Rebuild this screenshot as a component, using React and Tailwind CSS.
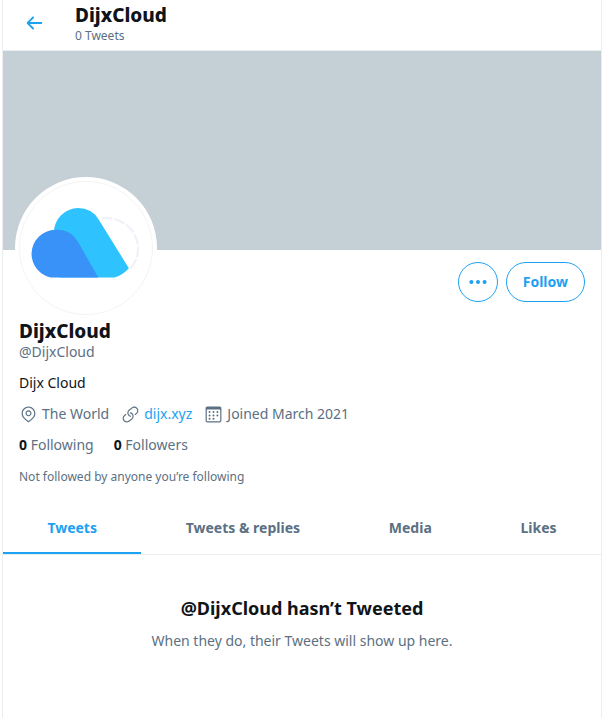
import React from "react";

function Icon({ className, children }) {
  return (
    <svg viewBox="0 0 24 24" aria-hidden="true" className={`shrink-0 fill-current ${className}`}>
      {children}
    </svg>
  );
}

function BackIcon() {
  return (
    <Icon className="size-[22px]">
      <path d="M20 11H7.414l4.293-4.293c.39-.39.39-1.023 0-1.414s-1.023-.39-1.414 0l-6 6c-.39.39-.39 1.023 0 1.414l6 6c.195.195.45.293.707.293s.512-.098.707-.293c.39-.39.39-1.023 0-1.414L7.414 13H20c.553 0 1-.447 1-1s-.447-1-1-1z" />
    </Icon>
  );
}

function PinIcon() {
  return (
    <Icon className="size-[19px]">
      <path d="M12 14.315c-2.088 0-3.787-1.698-3.787-3.786S9.913 6.74 12 6.74s3.787 1.7 3.787 3.787-1.7 3.785-3.787 3.785zm0-6.073c-1.26 0-2.287 1.026-2.287 2.287S10.74 12.814 12 12.814s2.287-1.025 2.287-2.286S13.26 8.24 12 8.24z" />
      <path d="M20.692 10.69C20.692 5.9 16.792 2 12 2s-8.692 3.9-8.692 8.69c0 1.902.603 3.708 1.743 5.223l.003-.002.007.015c1.628 2.07 6.278 5.757 6.475 5.912.138.11.302.163.465.163.163 0 .327-.053.465-.162.197-.155 4.847-3.84 6.475-5.912l.007-.014.002.002c1.14-1.516 1.742-3.32 1.742-5.223zM12 20.29c-1.224-.99-4.52-3.715-5.756-5.285-.94-1.25-1.436-2.742-1.436-4.312C4.808 6.727 8.035 3.5 12 3.5s7.192 3.226 7.192 7.19c0 1.57-.497 3.062-1.436 4.313-1.236 1.57-4.532 4.294-5.756 5.285z" />
    </Icon>
  );
}

function LinkIcon() {
  return (
    <Icon className="size-[19px]">
      <path d="M11.96 14.945c-.067 0-.136-.01-.203-.027-1.13-.318-2.097-.986-2.795-1.932-.832-1.125-1.176-2.508-.968-3.893s.942-2.605 2.068-3.438l3.53-2.608c2.322-1.716 5.61-1.224 7.33 1.1.83 1.127 1.175 2.51.967 3.895s-.943 2.605-2.07 3.438l-1.48 1.094c-.333.246-.804.175-1.05-.158-.246-.334-.176-.804.158-1.05l1.48-1.095c.803-.592 1.327-1.463 1.476-2.45.148-.988-.098-1.975-.69-2.778-1.225-1.656-3.572-2.01-5.23-.784l-3.53 2.608c-.802.593-1.326 1.464-1.475 2.45-.15.99.097 1.975.69 2.778.498.675 1.187 1.15 1.992 1.377.4.114.633.528.52.928-.092.33-.394.547-.722.547z" />
      <path d="M7.27 22.054c-1.61 0-3.197-.735-4.225-2.125-.832-1.127-1.176-2.51-.968-3.894s.943-2.605 2.07-3.438l1.478-1.094c.334-.245.805-.175 1.05.158s.177.804-.157 1.05l-1.48 1.095c-.803.593-1.326 1.464-1.475 2.45-.148.99.097 1.975.69 2.778 1.225 1.657 3.57 2.01 5.23.785l3.528-2.608c1.658-1.225 2.01-3.57.785-5.23-.498-.674-1.187-1.15-1.992-1.376-.4-.113-.633-.527-.52-.927.112-.4.528-.63.926-.522 1.13.318 2.096.986 2.794 1.932 1.717 2.324 1.224 5.612-1.1 7.33l-3.53 2.608c-.933.693-2.023 1.026-3.105 1.026z" />
    </Icon>
  );
}

function CalendarIcon() {
  return (
    <Icon className="size-[19px]">
      <path d="M19.708 2H4.292C3.028 2 2 3.028 2 4.292v15.416C2 20.972 3.028 22 4.292 22h15.416C20.972 22 22 20.972 22 19.708V4.292C22 3.028 20.972 2 19.708 2zm.792 17.708c0 .437-.355.792-.792.792H4.292c-.437 0-.792-.355-.792-.792V6.418c0-.437.354-.79.79-.792h15.42c.436 0 .79.355.79.79V19.71z" />
      <circle cx="7.032" cy="8.75" r="1.285" />
      <circle cx="12" cy="8.75" r="1.285" />
      <circle cx="16.968" cy="8.75" r="1.285" />
      <circle cx="7.032" cy="13.156" r="1.285" />
      <circle cx="12" cy="13.156" r="1.285" />
      <circle cx="16.968" cy="13.156" r="1.285" />
      <circle cx="7.032" cy="17.486" r="1.285" />
      <circle cx="12" cy="17.486" r="1.285" />
    </Icon>
  );
}

function MoreIcon() {
  return (
    <Icon className="size-[22px]">
      <circle cx="4.8" cy="12" r="2.2" />
      <circle cx="12" cy="12" r="2.2" />
      <circle cx="19.2" cy="12" r="2.2" />
    </Icon>
  );
}

function CloudLogo() {
  return (
    <svg viewBox="0 0 134 134" role="img" aria-label="DijxCloud logo" className="size-full">
      <path
        d="M83 37 A32 31 0 0 1 112 88"
        fill="none"
        stroke="#f1f2f9"
        strokeWidth="2.5"
        strokeDasharray="11 2"
      />
      <path
        d="M34.500 51 A24.500 24.500 0 0 1 59 26.500 A24.500 24.500 0 0 1 80 38.400 L110.500 87.500 Q105 94 96 97 H40 Z"
        fill="#2ec3ff"
      />
      <path
        d="M31 97 A25 25 0 0 1 11.700 73 A24.500 24.500 0 0 1 36 48.500 C46 48 54 52 59 61 L79.500 97 Z"
        fill="#3992f8"
      />
    </svg>
  );
}

const tabs = ["Tweets", "Tweets & replies", "Media", "Likes"];

export default function App() {
  return (
    <main className="ml-0.5 min-h-screen max-w-[600px] border-x border-[#ebeef0] bg-white font-['Noto_Sans','Open_Sans',sans-serif] text-sm leading-5 text-[#5b7083]">
      <header className="flex h-[51px] items-center border-b border-[#ebeef0] pl-5">
        <button type="button" aria-label="Back" className="mr-[30px] -mt-1 text-[#1da1f2]">
          <BackIcon />
        </button>
        <div className="-mt-0.5">
          <h2 className="text-[19px] leading-6 font-extrabold text-[#0f1419]">DijxCloud</h2>
          <p className="text-xs leading-[18px]">0 Tweets</p>
        </div>
      </header>

      <div className="h-[199px] bg-[#c4cfd6]" />

      <section className="px-4">
        <div className="flex items-start justify-between pt-3">
          <a
            href="#photo"
            className="-mt-[85px] -ml-1 size-[142px] rounded-full bg-white p-1"
          >
            <span className="block size-full overflow-hidden rounded-full border border-[#f3f4f5]">
              <CloudLogo />
            </span>
          </a>
          <div className="flex gap-2">
            <button
              type="button"
              aria-label="More"
              className="flex size-10 items-center justify-center rounded-full border border-[#1da1f2] text-[#1da1f2]"
            >
              <MoreIcon />
            </button>
            <button
              type="button"
              className="h-10 rounded-full border border-[#1da1f2] px-4 font-bold text-[#1da1f2]"
            >
              Follow
            </button>
          </div>
        </div>

        <h1 className="text-[19px] leading-6 font-extrabold text-[#0f1419]">DijxCloud</h1>
        <p className="leading-[18px]">@DijxCloud</p>
        <p className="mt-3 text-[#0f1419]">Dijx Cloud</p>

        <div className="mt-[11px] flex items-center">
          <span className="mr-3 flex items-center gap-1">
            <PinIcon />
            The World
          </span>
          <span className="mr-3 flex items-center gap-1">
            <LinkIcon />
            <a href="#website" className="text-[#1da1f2]">dijx.xyz</a>
          </span>
          <span className="flex items-center gap-1">
            <CalendarIcon />
            Joined March 2021
          </span>
        </div>

        <div className="mt-[11px] flex gap-5">
          <a href="#following">
            <b className="text-[#0f1419]">0</b> Following
          </a>
          <a href="#followers">
            <b className="text-[#0f1419]">0</b> Followers
          </a>
        </div>

        <p className="mt-3 text-xs leading-5">Not followed by anyone you’re following</p>
      </section>

      <nav className="mt-[15px] flex border-b border-[#ebeef0] font-bold">
        {tabs.map((tab, i) => (
          <a
            key={tab}
            href="#tab"
            aria-current={i === 0 ? "page" : undefined}
            className={`flex h-[52px] flex-auto items-center justify-center border-b-2 pt-0.5 ${
              i === 0 ? "border-[#1da1f2] text-[#1da1f2]" : "border-transparent"
            }`}
          >
            {tab}
          </a>
        ))}
      </nav>

      <section className="px-5 pt-[41px] text-center">
        <h2 className="text-lg leading-6 font-bold text-[#0f1419]">@DijxCloud hasn’t Tweeted</h2>
        <p className="mt-[11px]">When they do, their Tweets will show up here.</p>
      </section>
    </main>
  );
}
